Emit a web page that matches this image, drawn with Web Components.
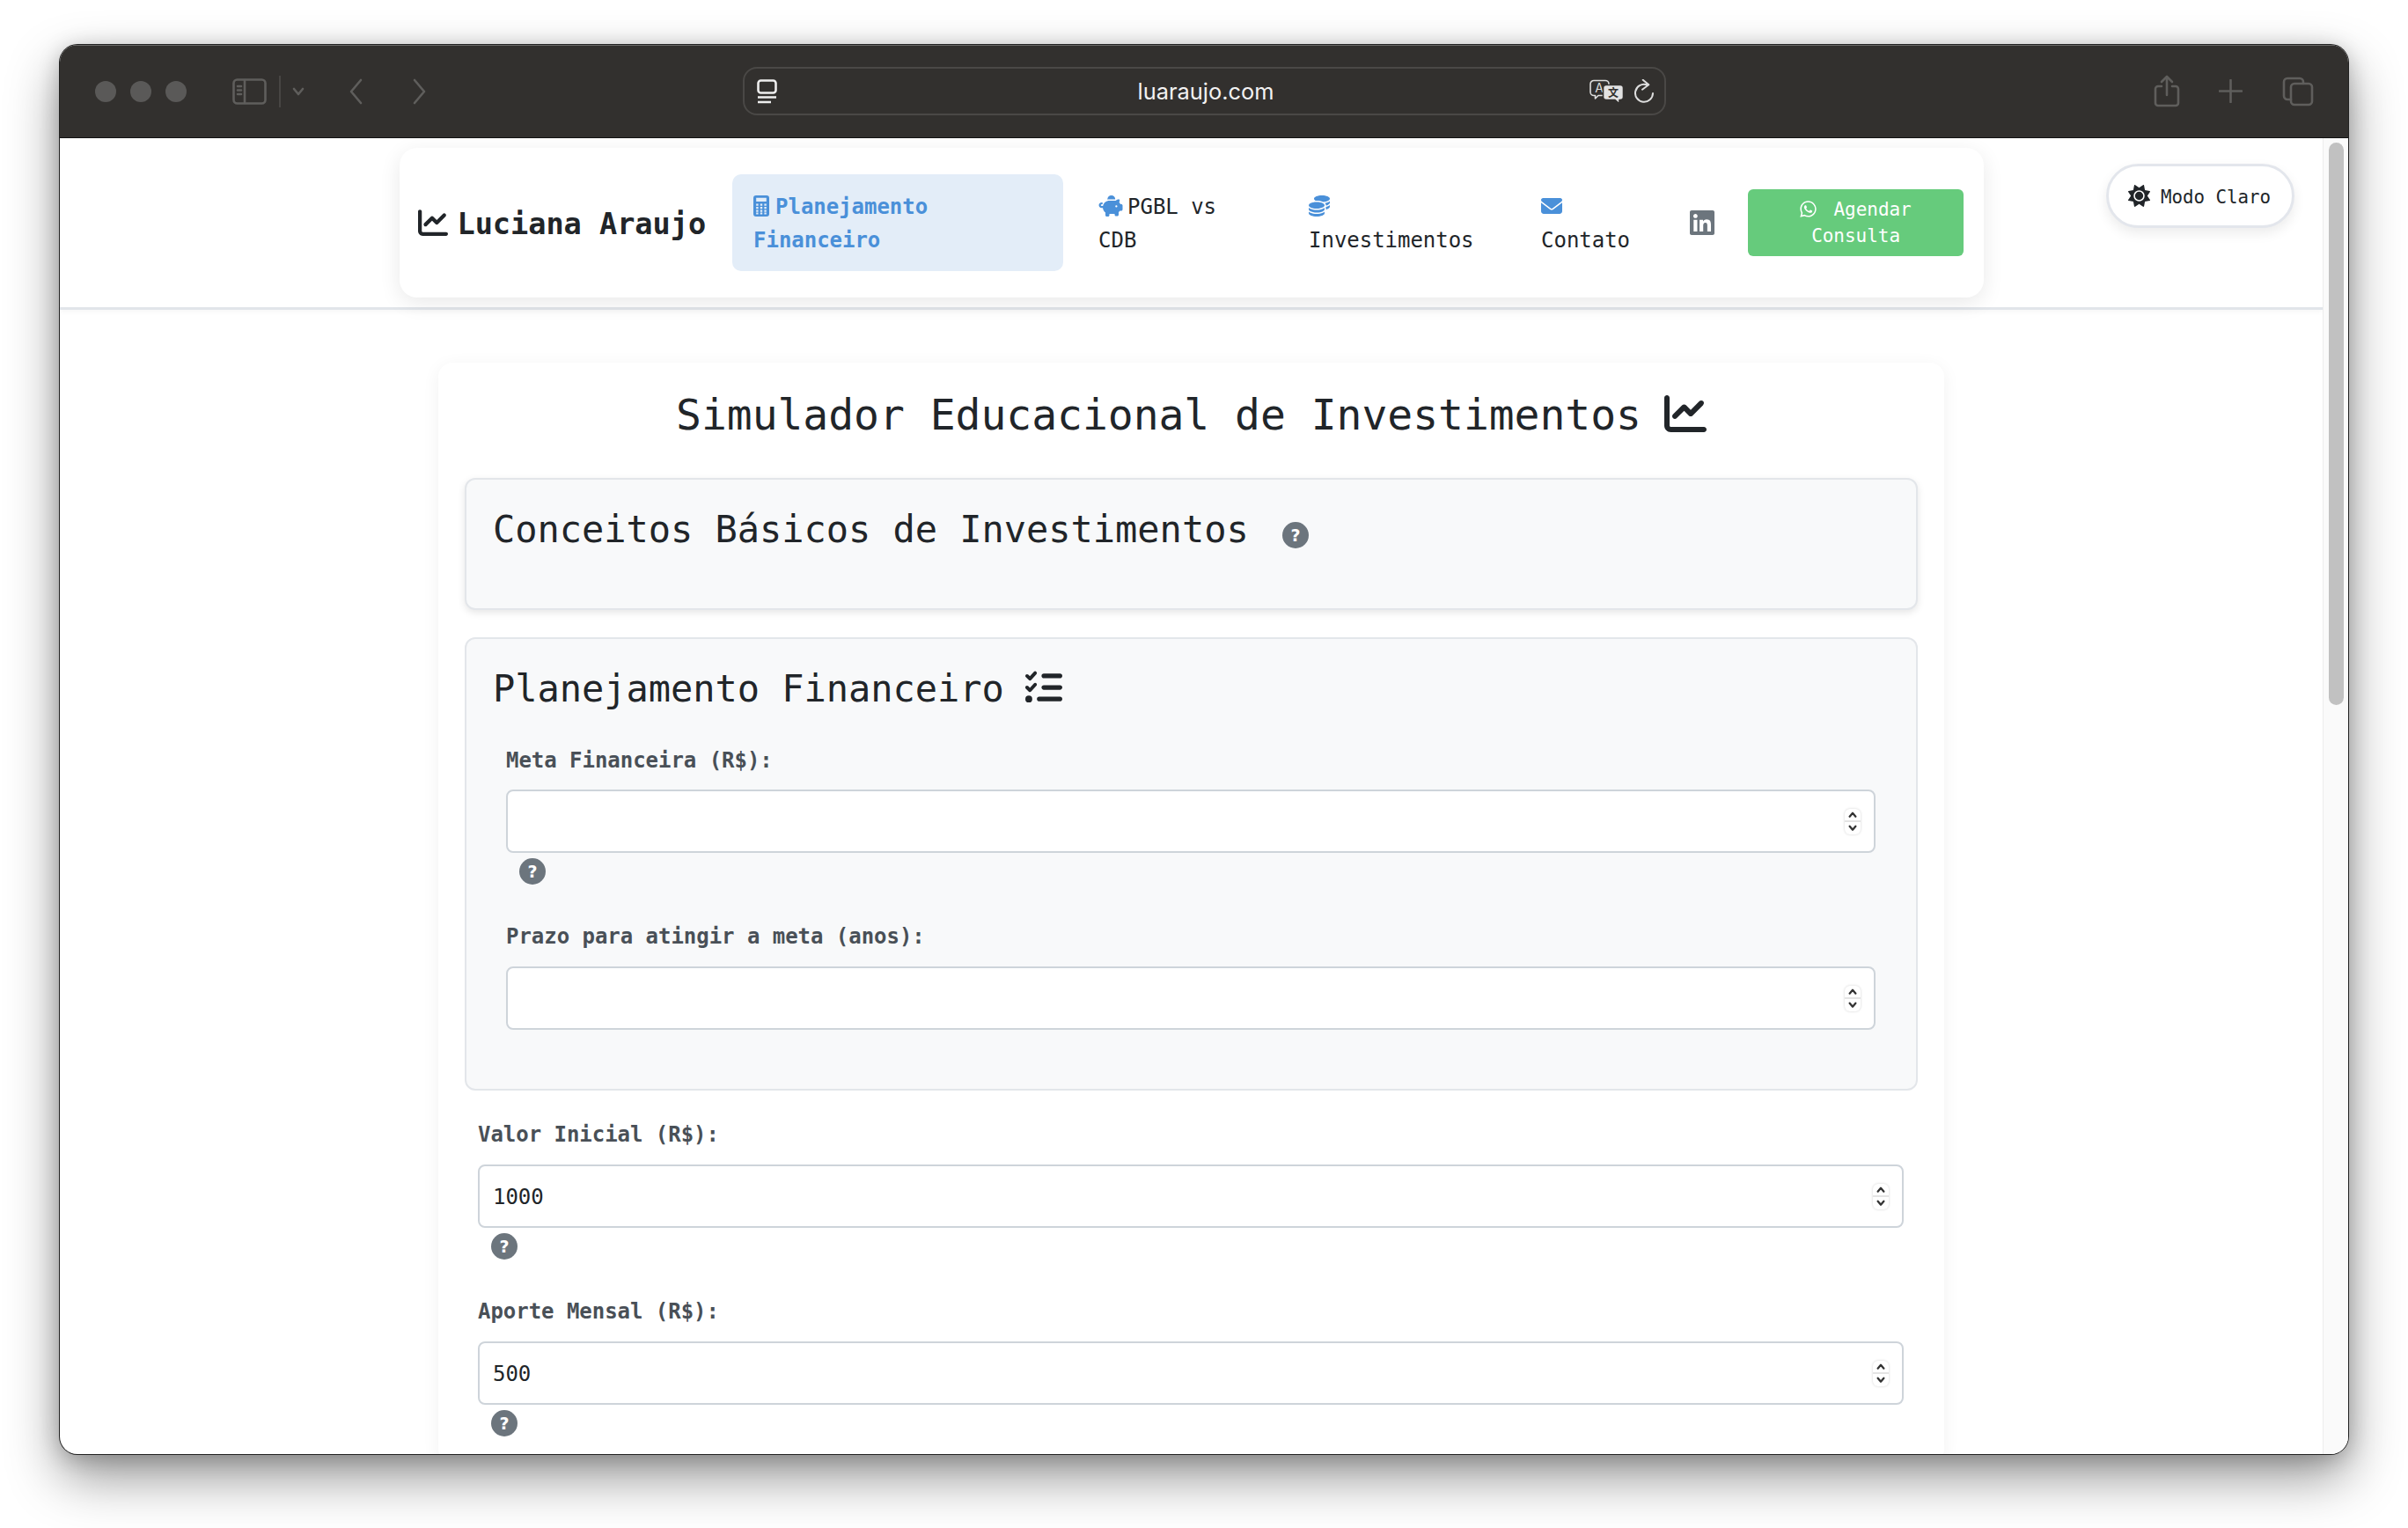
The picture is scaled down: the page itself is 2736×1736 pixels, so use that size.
<!DOCTYPE html>
<html lang="pt-BR">
<head>
<meta charset="utf-8">
<title>Simulador Educacional de Investimentos</title>
<style>
  html, body { margin: 0; background: #fff; overflow: hidden; }
  body { height: 1736px; font-family: "DejaVu Sans Mono", "Liberation Mono", monospace; letter-spacing: -.002em; color: #212529; }
  .fa { fill: currentColor; display: inline-block; }
</style>
</head>
<body>

<browser-window>
  <site-header></site-header>
  <theme-toggle>Modo Claro</theme-toggle>
  <main-card>
    <card-title slot="title">Simulador Educacional de Investimentos
      <svg slot="icon" class="fa" width="48" height="48" viewBox="0 0 512 512" style="fill:#212529"><path d="M64 64c0-17.7-14.3-32-32-32S0 46.3 0 64V400c0 44.2 35.8 80 80 80H480c17.7 0 32-14.3 32-32s-14.3-32-32-32H80c-8.8 0-16-7.2-16-16V64zm406.6 86.6c12.5-12.5 12.5-32.8 0-45.3s-32.8-12.5-45.3 0L320 210.7l-57.4-57.4c-12.5-12.5-32.8-12.5-45.3 0l-112 112c-12.5 12.5-12.5 32.8 0 45.3s32.8 12.5 45.3 0L240 221.3l57.4 57.4c12.5 12.5 32.8 12.5 45.3 0l128-128z"/></svg>
    </card-title>
    <form-section style="--gap:34px;--shadow:0 3px 8px rgba(0,0,0,.1)">
      <section-title>Conceitos Básicos de Investimentos <help-dot style="margin-left:13px;position:relative;top:3px"></help-dot></section-title>
    </form-section>
    <form-section style="--gap:0;margin-top:31px;margin-bottom:35px">
      <section-title>Planejamento Financeiro
        <svg class="fa" width="42" height="42" viewBox="0 0 512 512" style="fill:#212529;vertical-align:-5px;margin-left:-1px"><path d="M152.1 38.2c9.9 8.9 10.7 24 1.8 33.9l-72 80c-4.4 4.9-10.6 7.8-17.2 7.9s-12.9-2.4-17.6-7L7 113C-2.3 103.6-2.3 88.4 7 79s24.6-9.4 33.9 0l22.1 22.1 55.1-61.2c8.9-9.9 24-10.7 33.9-1.8zm0 160c9.9 8.9 10.7 24 1.8 33.9l-72 80c-4.4 4.9-10.6 7.8-17.2 7.9s-12.9-2.4-17.6-7L7 273c-9.4-9.4-9.4-24.6 0-33.9s24.6-9.4 33.9 0l22.1 22.1 55.1-61.2c8.9-9.9 24-10.7 33.9-1.8zM224 96c0-17.7 14.3-32 32-32H480c17.7 0 32 14.3 32 32s-14.3 32-32 32H256c-17.7 0-32-14.3-32-32zm0 160c0-17.7 14.3-32 32-32H480c17.7 0 32 14.3 32 32s-14.3 32-32 32H256c-17.7 0-32-14.3-32-32zM160 416c0-17.7 14.3-32 32-32H480c17.7 0 32 14.3 32 32s-14.3 32-32 32H192c-17.7 0-32-14.3-32-32zM48 368a48 48 0 1 1 0 96 48 48 0 1 1 0-96z"/></svg>
      </section-title>
      <number-field help style="margin-top:41px;--label-gap:18px">Meta Financeira (R$):</number-field>
      <number-field style="margin-top:44px;margin-bottom:37px">Prazo para atingir a meta (anos):</number-field>
    </form-section>
    <number-field value="1000" help>Valor Inicial (R$):</number-field>
    <number-field value="500" help style="margin-top:44px">Aporte Mensal (R$):</number-field>
  </main-card>
</browser-window>

<template id="browser-window-tpl">
  <style>
    :host { display: flex; flex-direction: column; width: 2600px; height: 1601px; margin: 51px 0 0 68px; border-radius: 20px; overflow: hidden; background: #fff; box-shadow: 0 0 0 1px #222, 0 26px 60px rgba(0,0,0,.42), 0 4px 24px rgba(0,0,0,.22); }
    .view { flex: 1; min-height: 0; display: flex; position: relative; }
    .page { flex: 1; min-width: 0; overflow: hidden; position: relative; }
    .track { width: 29px; flex: none; background: #fafafa; border-left: 1px solid #ececec; padding: 5px 5px 0 6px; box-sizing: border-box; }
    .thumb { height: 639px; background: #c1c1c1; border-radius: 9px; }
  </style>
  <safari-toolbar></safari-toolbar>
  <div class="view">
    <div class="page"><slot></slot></div>
    <div class="track"><div class="thumb"></div></div>
  </div>
</template>

<template id="safari-toolbar-tpl">
  <style>
    :host { display: flex; align-items: center; flex: none; height: 106px; background: #32302e; box-sizing: border-box; padding-left: 40px; border-bottom: 1px solid #111; box-shadow: inset 0 1px 0 #6a6967; }
    svg { display: block; flex: none; fill: none; stroke: #5f5e5c; stroke-width: 2.6; stroke-linecap: round; stroke-linejoin: round; }
    .lights { display: flex; gap: 16px; }
    .lights i { width: 24px; height: 24px; border-radius: 50%; background: #5a5958; }
    .div { width: 2px; height: 36px; background: #484644; margin-left: 14px; flex: none; }
    .url { margin-left: 359px; width: 1049px; height: 55px; box-sizing: border-box; border: 2px solid #4a4846; border-radius: 16px; display: flex; align-items: center; padding: 0 10px 0 14px; flex: none; }
    .url svg { stroke: #eee; }
    .url span { flex: 1; text-align: center; padding-left: 51px; font: 400 25.4px "Inter", "Liberation Sans", sans-serif; letter-spacing: 0; color: #f2f2f2; }
    text { stroke: none; }
  </style>
  <div class="lights"><i></i><i></i><i></i></div>
  <svg style="margin-left:52px" width="39" height="30" viewBox="0 0 39 30"><rect x="1.5" y="1.5" width="36" height="27" rx="4"/><path d="M14 2v26M6 9h4M6 13.5h4M6 18h4"/></svg>
  <div class="div"></div>
  <svg style="margin-left:13px" width="14" height="10" viewBox="0 0 14 10"><path d="M2 2l5 6 5-6"/></svg>
  <svg style="margin-left:50px" width="16" height="30" viewBox="0 0 16 30"><path d="M14 2L3 15l11 13"/></svg>
  <svg style="margin-left:56px" width="17" height="30" viewBox="0 0 17 30"><path d="M3 2l11 13L3 28"/></svg>
  <div class="url">
    <svg width="23" height="28" viewBox="0 0 23 28"><rect x="1.5" y="1.5" width="20" height="14" rx="3"/><path d="M1 20.5h21M1 26h15" stroke-linecap="butt"/></svg>
    <span>luaraujo.com</span>
    <svg width="39" height="28" viewBox="0 0 39 28" style="stroke-width:1.6">
      <path d="M5 1.500h13a4 4 0 0 1 4 4v9a4 4 0 0 1-4 4H10l-3.500 3.500V18.500H5a4 4 0 0 1-4-4v-9a4 4 0 0 1 4-4z" stroke="#ddd"/>
      <text x="11" y="15" font-family="Inter, sans-serif" font-size="14" text-anchor="middle" fill="#ddd">A</text>
      <path d="M19 6.500h16a3.500 3.500 0 0 1 3.500 3.500v10a3.500 3.500 0 0 1-3.500 3.500H34v4.500l-5-4.500H19a3.500 3.500 0 0 1-3.500-3.500V10A3.500 3.500 0 0 1 19 6.500z" fill="#e2e2e2" stroke="#32302e"/>
      <text x="27" y="20" font-family="'Noto Sans CJK SC', sans-serif" font-size="12" font-weight="700" text-anchor="middle" fill="#32302e">文</text>
    </svg>
    <svg style="margin-left:12px;stroke:#ddd" width="24" height="28" viewBox="0 0 24 28"><path d="M14 6.300A10 10 0 1 0 21 16M9.700 .8l6.600 5.500L9 11.700" stroke-width="2"/></svg>
  </div>
  <svg style="margin-left:554px" width="30" height="37" viewBox="0 0 30 37"><path d="M9 13H5a3 3 0 0 0-3 3v16a3 3 0 0 0 3 3h20a3 3 0 0 0 3-3V16a3 3 0 0 0-3-3h-4M15 23V2M9 8l6-6 6 6"/></svg>
  <svg style="margin-left:44px" width="27" height="27" viewBox="0 0 27 27"><path d="M13.500 1v25M1 13.500h25"/></svg>
  <svg style="margin-left:45px" width="36" height="34" viewBox="0 0 36 34"><rect x="10" y="8" width="24" height="24" rx="4"/><path d="M10 26H6a4 4 0 0 1-4-4V6a4 4 0 0 1 4-4h14a4 4 0 0 1 4 4v2"/></svg>
</template>

<template id="site-header-tpl">
  <style>
    :host { display: block; padding: 11px 0 11px; border-bottom: 3px solid #e1e5ea; box-shadow: 0 2px 6px rgba(0,0,0,.04); background: #fff; }
    nav { width: 1800px; height: 170px; margin: 0 auto; box-sizing: border-box; padding: 0 21px; border-radius: 20px; background: #fff; box-shadow: 0 6px 24px rgba(0,0,0,.09); display: flex; align-items: center; }
    .logo { display: flex; align-items: center; gap: 11px; font-size: 33.6px; font-weight: 700; white-space: nowrap; margin-right: 30px; color: #212529; }
    .logo span { position: relative; top: 1px; }
    .fa { fill: currentColor; display: inline-block; }
    .in { margin-left: 45px; color: #6c757d; line-height: 0; }
    .cta { flex: none; margin-left: 38px; width: 245px; height: 76px; border-radius: 6px; background: #66cb7c; color: #fff; font-size: 21px; line-height: 30px; text-align: center; box-sizing: border-box; padding: 8px 16px; }
    .cta svg { vertical-align: -3px; margin-right: 19px; }
    nav-link + nav-link { margin-left: 16px; }
  </style>
  <nav>
    <div class="logo">
      <svg class="fa" width="34" height="34" viewBox="0 0 512 512"><path d="M64 64c0-17.7-14.3-32-32-32S0 46.3 0 64V400c0 44.2 35.8 80 80 80H480c17.7 0 32-14.3 32-32s-14.3-32-32-32H80c-8.8 0-16-7.2-16-16V64zm406.6 86.6c12.5-12.5 12.5-32.8 0-45.3s-32.8-12.5-45.3 0L320 210.7l-57.4-57.4c-12.5-12.5-32.8-12.5-45.3 0l-112 112c-12.5 12.5-12.5 32.8 0 45.3s32.8 12.5 45.3 0L240 221.3l57.4 57.4c12.5 12.5 32.8 12.5 45.3 0l128-128z"/></svg>
      <span>Luciana Araujo</span>
    </div>
    <nav-link active style="width:376px"><svg slot="icon" class="fa" width="18" height="24" viewBox="0 0 18 24"><path fill-rule="evenodd" d="M3 0h12a3 3 0 0 1 3 3v18a3 3 0 0 1-3 3H3a3 3 0 0 1-3-3V3a3 3 0 0 1 3-3zM3.200 2.800v4.200h11.600V2.800zM3.200 9.400v2.400h2.400V9.400zM7.800 9.400v2.400h2.400V9.400zM12.400 9.400v2.400h2.400V9.400zM3.200 12.900v2.400h2.400v-2.400zM7.800 12.900v2.400h2.400v-2.400zM12.400 12.900v2.400h2.400v-2.400zM3.200 16.400v2.400h2.400v-2.400zM7.800 16.400v2.400h2.400v-2.400zM12.400 16.400v2.400h2.400v-2.400zM3.200 19.600v1.800h2.400v-1.800zM7.800 19.600v1.800h2.400v-1.800zM12.400 19.600v1.800h2.400v-1.800z"/></svg>Planejamento Financeiro</nav-link>
    <nav-link style="width:223px"><svg slot="icon" class="fa" width="28" height="24" viewBox="0 0 576 512"><path d="M400 96l0 .7c-5.300-.4-10.600-.7-16-.7H256c-16.500 0-32.500 2.100-47.800 6c-.1-2-.2-4-.2-6c0-53 43-96 96-96s96 43 96 96zm-16 32c3.500 0 7 .1 10.400 .3c4.200 .3 8.400 .7 12.600 1.300C424.600 109.100 450.800 96 480 96h11.500c10.400 0 18 9.800 15.500 19.900l-13.800 55.200c11.800 11.100 21.300 24.400 28.100 39.300c.9 .3 1.700 .6 2.700 .6H544c17.700 0 32 14.300 32 32v96c0 17.700-14.300 32-32 32H512c-9.100 12.100-19.900 22.900-32 32v64c0 17.700-14.300 32-32 32H416c-17.700 0-32-14.300-32-32V448H256v32c0 17.700-14.300 32-32 32H192c-17.700 0-32-14.300-32-32V416c-34.900-26.200-58.700-66.300-63.200-112H68c-37.600 0-68-30.400-68-68s30.400-68 68-68h4c13.300 0 24 10.700 24 24s-10.700 24-24 24H68c-11 0-20 9-20 20s9 20 20 20H99.200c12.100-59.800 57.700-107.500 116.300-122.800c12.900-3.400 26.500-5.200 40.500-5.200H384zm64 136a24 24 0 1 0 -48 0 24 24 0 1 0 48 0z"/></svg>PGBL vs CDB</nav-link>
    <nav-link style="width:248px"><svg slot="icon" class="fa" width="24" height="24" viewBox="0 0 512 512"><path d="M512 80c0 18-14.300 34.600-38.400 48c-29.100 16.100-72.500 27.500-122.300 30.900c-3.700-1.800-7.400-3.500-11.300-5C300.600 137.400 248.200 128 192 128c-8.300 0-16.400 .2-24.500 .6l-1.100-.6C142.300 114.600 128 98 128 80c0-44.200 86-80 192-80S512 35.800 512 80zM160.700 161.100c10.200-.7 20.700-1.100 31.300-1.100c62.200 0 117.400 12.300 152.500 31.400C369.300 204.900 384 221.700 384 240c0 4-.7 7.900-2.100 11.700c-4.600 13.200-17 25.300-35 35.500c0 0 0 0 0 0c-.1 .1-.3 .1-.4 .2l0 0 0 0c-.3 .2-.6 .3-.9 .5c-35 19.400-90.800 32-153.600 32c-59.600 0-112.900-11.300-148.200-29.100c-1.900-.9-3.700-1.900-5.500-2.900C14.300 274.600 0 258 0 240c0-34.800 53.400-64.500 128-75.400c10.500-1.500 21.400-2.700 32.700-3.500zM416 240c0-21.900-10.600-39.900-24.100-53.400c28.300-4.400 54.200-11.400 76.200-20.500c16.300-6.800 31.500-15.200 43.900-25.500V176c0 19.300-16.500 37.100-43.800 50.900c-14.600 7.400-32.400 13.700-52.400 18.500c.1-1.800 .2-3.500 .2-5.300zm-32 96c0 18-14.300 34.600-38.400 48c-1.800 1-3.600 1.900-5.500 2.900C304.900 404.700 251.600 416 192 416c-62.800 0-118.600-12.600-153.600-32C14.300 370.600 0 354 0 336V300.600c12.500 10.300 27.600 18.700 43.900 25.500C83.400 342.600 135.800 352 192 352s108.600-9.400 148.100-25.900c7.800-3.200 15.300-6.900 22.400-10.900c6.100-3.400 11.800-7.200 17.200-11.200c1.500-1.100 2.900-2.300 4.300-3.400V304v5.700V336zm32 0V304 278.100c19-4.200 36.500-9.500 52.100-16c16.300-6.800 31.500-15.200 43.900-25.500V272c0 10.500-5 21-14.900 30.900c-16.300 16.300-45 29.700-81.300 38.400c.1-1.700 .2-3.500 .2-5.300zM192 448c56.200 0 108.600-9.400 148.100-25.900c16.300-6.800 31.500-15.200 43.900-25.500V432c0 44.200-86 80-192 80S0 476.200 0 432V396.600c12.500 10.300 27.600 18.700 43.900 25.500C83.400 438.600 135.800 448 192 448z"/></svg>Investimentos</nav-link>
    <nav-link style="width:148px"><svg slot="icon" class="fa" width="24" height="24" viewBox="0 0 512 512"><path d="M48 64C21.500 64 0 85.500 0 112c0 15.100 7.100 29.300 19.200 38.400L236.800 313.600c11.400 8.500 27 8.500 38.400 0L492.800 150.400c12.100-9.100 19.200-23.300 19.200-38.400c0-26.500-21.500-48-48-48H48zM0 176V384c0 35.300 28.700 64 64 64H448c35.300 0 64-28.700 64-64V176L294.400 339.200c-22.800 17.100-54 17.100-76.800 0L0 176z"/></svg>Contato</nav-link>
    <div class="in">
      <svg class="fa" width="28" height="32" viewBox="0 0 448 512"><path d="M416 32H31.900C14.300 32 0 46.500 0 64.300v383.400C0 465.500 14.300 480 31.900 480H416c17.600 0 32-14.500 32-32.300V64.300c0-17.800-14.400-32.300-32-32.300zM135.400 416H69V202.200h66.500V416zm-33.200-243c-21.300 0-38.500-17.300-38.500-38.500S80.900 96 102.200 96c21.200 0 38.500 17.300 38.500 38.500 0 21.300-17.200 38.500-38.500 38.500zm282.100 243h-66.400V312c0-24.800-.5-56.700-34.500-56.700-34.600 0-39.900 27-39.900 54.900V416h-66.400V202.200h63.700v29.200h.9c8.900-16.800 30.600-34.500 62.900-34.500 67.200 0 79.700 44.300 79.700 101.900V416z"/></svg>
    </div>
    <div class="cta">
      <svg class="fa" width="19" height="21" viewBox="0 0 448 512"><path d="M380.900 97.100C339 55.100 283.200 32 223.900 32c-122.400 0-222 99.600-222 222 0 39.100 10.200 77.300 29.600 111L0 480l117.700-30.900c32.400 17.700 68.900 27 106.100 27h.1c122.300 0 224.100-99.600 224.100-222 0-59.300-25.200-115-67.100-157zm-157 341.600c-33.200 0-65.700-8.900-94-25.700l-6.700-4-69.800 18.300L72 359.200l-4.400-7c-18.500-29.400-28.200-63.300-28.200-98.200 0-101.700 82.800-184.500 184.600-184.500 49.300 0 95.600 19.200 130.400 54.100 34.800 34.900 56.200 81.200 56.100 130.500 0 101.800-84.900 184.600-186.600 184.600zm101.200-138.200c-5.500-2.800-32.800-16.200-37.900-18-5.100-1.900-8.800-2.800-12.500 2.800-3.700 5.600-14.300 18-17.600 21.800-3.200 3.700-6.500 4.200-12 1.400-32.600-16.300-54-29.100-75.500-66-5.700-9.800 5.700-9.100 16.300-30.300 1.800-3.700 .9-6.900-.5-9.700-1.400-2.800-12.500-30.100-17.100-41.200-4.500-10.800-9.100-9.300-12.500-9.500-3.200-.2-6.900-.2-10.600-.2-3.700 0-9.700 1.400-14.800 6.900-5.100 5.600-19.400 19-19.400 46.300 0 27.300 19.900 53.700 22.600 57.400 2.800 3.700 39.100 59.700 94.800 83.800 35.200 15.200 49 16.500 66.600 13.900 10.700-1.600 32.800-13.400 37.400-26.400 4.600-13 4.600-24.100 3.200-26.400-1.300-2.500-5-3.900-10.500-6.600z"/></svg>Agendar Consulta
    </div>
  </nav>
</template>

<template id="nav-link-tpl">
  <style>
    :host { display: block; flex: none; box-sizing: border-box; padding: 18px 24px 16px; border-radius: 10px; font-size: 24px; line-height: 38px; color: #212529; }
    :host([active]) { background: #e3edf8; color: #4a90d9; font-weight: 700; }
    .ic { color: #4a90d9; margin-right: 5px; }
    :host([active]) .ic { margin-right: 7px; }
    ::slotted(svg) { vertical-align: -3px; }
  </style>
  <span class="ic"><slot name="icon"></slot></span><slot></slot>
</template>

<template id="theme-toggle-tpl">
  <style>
    :host { position: absolute; left: 2325px; top: 29px; width: 214px; height: 73px; box-sizing: border-box; border: 3px solid #e3e6ec; border-radius: 37px; background: #fff; box-shadow: 0 6px 14px rgba(0,0,0,.08); display: flex; align-items: center; gap: 12px; padding-left: 22px; padding-top: 2px; font-size: 20.8px; color: #212529; z-index: 2; }
    svg { fill: #212529; flex: none; margin-top: -2px; }
  </style>
  <svg width="25" height="25" viewBox="0 0 512 512"><path d="M361.500 1.200c5 2.100 8.600 6.600 9.600 11.900L391 121l107.900 19.800c5.300 1 9.800 4.600 11.900 9.600s1.500 10.700-1.600 15.200L446.900 256l62.300 90.300c3.100 4.500 3.700 10.200 1.600 15.200s-6.600 8.600-11.900 9.600L391 391 371.100 498.900c-1 5.300-4.600 9.800-9.600 11.900s-10.700 1.500-15.200-1.600L256 446.900l-90.300 62.300c-4.500 3.100-10.200 3.700-15.200 1.600s-8.600-6.600-9.600-11.900L121 391 13.100 371.100c-5.300-1-9.800-4.600-11.900-9.600s-1.500-10.700 1.600-15.200L65.100 256 2.800 165.700c-3.100-4.500-3.700-10.200-1.600-15.200s6.600-8.600 11.900-9.600L121 121 140.900 13.100c1-5.300 4.600-9.800 9.600-11.900s10.700-1.500 15.200 1.600L256 65.100 346.300 2.800c4.500-3.100 10.200-3.700 15.200-1.600zM160 256a96 96 0 1 1 192 0 96 96 0 1 1 -192 0zm224 0a128 128 0 1 0 -256 0 128 128 0 1 0 256 0z"/></svg>
  <slot></slot>
</template>

<template id="main-card-tpl">
  <style>
    :host { display: block; width: 1711px; margin: 60px auto 0; box-sizing: border-box; padding: 30px; border-radius: 16px; background: #fff; box-shadow: 0 4px 20px rgba(0,0,0,.06); }
  </style>
  <slot name="title"></slot>
  <slot></slot>
</template>

<template id="card-title-tpl">
  <style>
    :host { display: flex; justify-content: center; align-items: center; gap: 26px; height: 58px; margin-bottom: 43px; font-size: 48px; color: #212529; white-space: nowrap; }
    ::slotted(svg) { position: relative; top: -1px; }
  </style>
  <slot></slot><slot name="icon"></slot>
</template>

<template id="form-section-tpl">
  <style>
    :host { display: block; border: 2px solid #e3e6ea; border-radius: 12px; background: #f8f9fa; padding: 30px; box-shadow: var(--shadow, none); }
    .g { height: var(--gap, 0); }
  </style>
  <slot></slot><div class="g"></div>
</template>

<template id="section-title-tpl">
  <style>
    :host { display: block; padding-top: 2px; font-size: 42px; line-height: 50px; color: #212529; white-space: nowrap; }
  </style>
  <slot></slot>
</template>

<template id="help-dot-tpl">
  <style>
    :host { display: inline-flex; align-items: center; justify-content: center; width: 30px; height: 30px; border-radius: 50%; background: #6c757d; color: #fff; font: 700 19px/30px "DejaVu Sans", "Liberation Sans", sans-serif; vertical-align: middle; }
  </style>
  ?
</template>

<template id="number-field-tpl">
  <style>
    :host { display: block; padding: 0 16px 0 15px; }
    label { display: block; font-size: 24px; line-height: 30px; font-weight: 700; color: #495057; margin-bottom: var(--label-gap, 19px); white-space: nowrap; }
    .box { height: 72px; box-sizing: border-box; border: 2px solid #ced4da; border-radius: 8px; background: #fff; display: flex; align-items: center; justify-content: space-between; padding: 0 15px; font-size: 24px; color: #212529; }
    .val { position: relative; top: 1px; }
    .spin { width: 18px; height: 29px; box-sizing: border-box; border-radius: 6px; background: #fff; box-shadow: 0 0 3px rgba(0,0,0,.18); display: flex; flex-direction: column; }
    .spin svg { display: block; flex: 1; min-height: 0; fill: none; stroke: #333; stroke-width: 2.4; stroke-linecap: round; stroke-linejoin: round; }
    .spin svg + svg { border-top: 2px solid #e4e4e4; }
    help-dot { display: none; }
    :host([help]) help-dot { display: flex; margin: 6px 0 0 15px; }
  </style>
  <label><slot></slot></label>
  <div class="box">
    <span class="val"></span>
    <div class="spin">
      <svg viewBox="0 0 18 14"><path d="M5.500 9l3.500-4 3.500 4"/></svg>
      <svg viewBox="0 0 18 14"><path d="M5.500 5l3.500 4 3.500-4"/></svg>
    </div>
  </div>
  <help-dot></help-dot>
</template>

<script>
  // all of them only clone their template, number-field also fills in the value
  function define(name, extra) {
    customElements.define(name, class extends HTMLElement {
      constructor() {
        super();
        const shadow = this.attachShadow({ mode: 'open' });
        shadow.appendChild(document.getElementById(name + '-tpl').content.cloneNode(true));
        if (extra) extra(this, shadow);
      }
    });
  }

  define('help-dot');
  define('nav-link');
  define('safari-toolbar');
  define('site-header');
  define('theme-toggle');
  define('card-title');
  define('section-title');
  define('form-section');
  define('main-card');
  define('browser-window');
  define('number-field', (el, shadow) => {
    shadow.querySelector('.val').textContent = el.getAttribute('value') || '';
  });
</script>
</body>
</html>
